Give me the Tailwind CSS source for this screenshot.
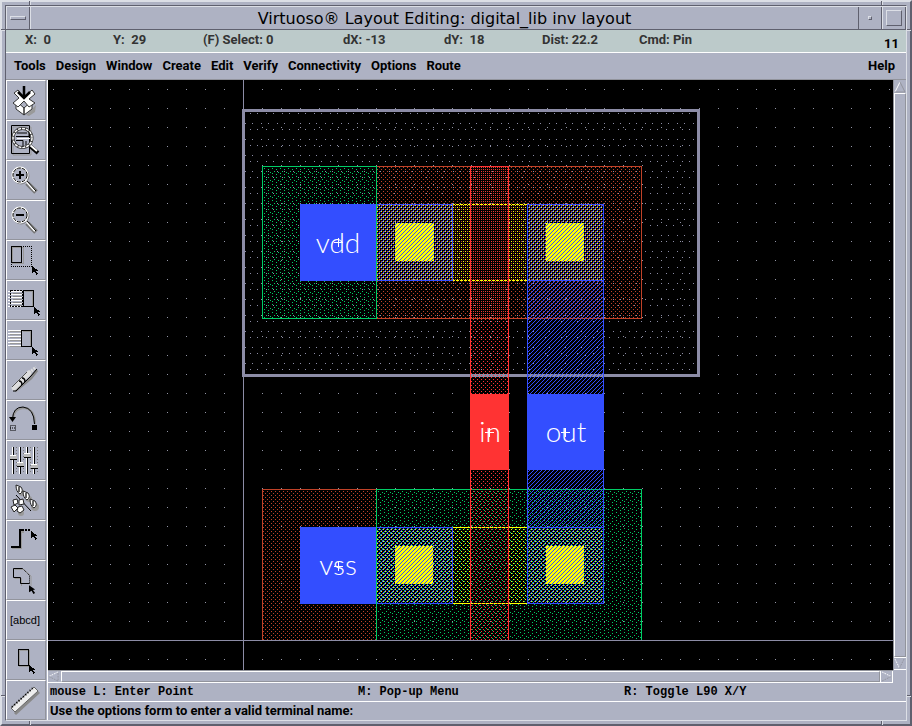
<!DOCTYPE html>
<html lang="en">
<head>
<meta charset="utf-8">
<title>Virtuoso Layout Editing</title>
<script src="https://cdn.jsdelivr.net/npm/@tailwindcss/browser@4"></script>
</head>
<body class="bg-[#aeb2c3] text-black font-['Roboto','Liberation_Sans',sans-serif]">
<svg class="absolute w-0 h-0" aria-hidden="true">
  <defs>
    <symbol id="cursor" viewBox="0 0 8 10"><path d="M0 0L7 5L4.500 5.500L7 9L5 10L3 6.500L0 8Z" fill="#000"/></symbol>
  </defs>
</svg>
<div class="relative min-h-screen flex flex-col border-2 border-t-[#dcdfe6] border-l-[#dcdfe6] border-b-[#5f606e] border-r-[#5f606e] p-[3px]">
  <i class="absolute -top-px left-[27px] h-1 w-0.5 bg-[#5f606e] border-r border-[#dcdfe6]"></i>
  <i class="absolute -top-px right-[27px] h-1 w-0.5 bg-[#5f606e] border-r border-[#dcdfe6]"></i>
  <i class="absolute -left-px top-[27px] w-1 h-0.5 bg-[#5f606e] border-b border-[#dcdfe6]"></i>
  <i class="absolute -right-px top-[27px] w-1 h-0.5 bg-[#5f606e] border-b border-[#dcdfe6]"></i>
  <i class="absolute -left-px bottom-[27px] w-1 h-0.5 bg-[#5f606e] border-b border-[#dcdfe6]"></i>
  <i class="absolute -right-px bottom-[27px] w-1 h-0.5 bg-[#5f606e] border-b border-[#dcdfe6]"></i>
  <i class="absolute -bottom-px left-[27px] h-1 w-0.5 bg-[#5f606e] border-r border-[#dcdfe6]"></i>
  <i class="absolute -bottom-px right-[27px] h-1 w-0.5 bg-[#5f606e] border-r border-[#dcdfe6]"></i>

  <div class="flex-1 flex flex-col border border-t-[#5f606e] border-l-[#5f606e] border-b-[#dcdfe6] border-r-[#dcdfe6]">
    <header class="flex h-6 border-t border-b border-t-[#dcdfe6] border-b-[#5f606e]">
      <button aria-label="Window menu" class="w-6 flex items-center justify-center border-l border-r border-l-[#dcdfe6] border-r-[#5f606e]">
        <span class="w-4 h-1 border border-t-[#dcdfe6] border-l-[#dcdfe6] border-b-[#5f606e] border-r-[#5f606e]"></span>
      </button>
      <h1 class="flex-1 border-l border-[#dcdfe6] text-center text-[16px] leading-6 font-['DejaVu_Sans',sans-serif]">Virtuoso® Layout Editing: digital_lib inv layout</h1>
      <button aria-label="Minimize" class="w-6 flex items-center justify-center border-l border-r border-[#5f606e]">
        <span class="size-1 border border-t-[#dcdfe6] border-l-[#dcdfe6] border-b-[#5f606e] border-r-[#5f606e]"></span>
      </button>
      <button aria-label="Maximize" class="w-6 flex items-center justify-center border-l border-r border-l-[#dcdfe6] border-r-[#5f606e]">
        <span class="size-4 border border-t-[#dcdfe6] border-l-[#dcdfe6] border-b-[#5f606e] border-r-[#5f606e]"></span>
      </button>
    </header>

    <div class="flex h-[23px] bg-[#bccaca] border-b border-white pl-[19px] pr-[7px] text-[13px] leading-5 font-bold text-[#333] whitespace-pre">
      <span class="w-[88px]">X:  0</span><span class="w-[90px]">Y:  29</span><span class="w-[140px]">(F) Select: 0</span><span class="w-[101px]">dX: -13</span><span class="w-[98px]">dY:  18</span><span class="w-[97px]">Dist: 22.2</span><span>Cmd: Pin</span>
      <span class="ml-auto self-end text-black leading-4">11</span>
    </div>

    <nav class="flex h-[27px] items-center gap-2.5 pl-2 pr-[11px] border-b border-[#92949c] text-[13px] font-bold">
      <button>Tools</button><button>Design</button><button>Window</button><button>Create</button><button>Edit</button><button>Verify</button><button>Connectivity</button><button>Options</button><button>Route</button>
      <button class="ml-auto">Help</button>
    </nav>

    <main class="flex-1 flex">
      <aside class="w-[42px] shrink-0 flex flex-col border-r border-white [&>button]:h-10 [&>button]:w-10 [&>button]:border [&>button]:border-t-white [&>button]:border-l-white [&>button]:border-b-[#92949c] [&>button]:border-r-[#92949c] [&_svg]:size-[38px]">
        <button aria-label="Save"><svg viewBox="0 0 38 38"><path d="M19 34L29 24L28 31L22 35Z" fill="#999"/><g stroke="#333" fill="#fff"><path d="M9 20L17 27V34L9 28ZM25 20L17 27V34L25 28Z"/><path d="M7 12L11 9L17 16L25 9L28 13L22 18L28 22L22 26L17 20L11 26L6 22L12 17Z"/></g><path d="M17 5V16M11 11L17 17L23 11" stroke="#000" stroke-width="2.500" fill="none"/></svg></button>
        <button aria-label="Fit"><svg viewBox="0 0 38 38" fill="none"><path d="M6 6H24V34H6Z" stroke="#999"/><path d="M4.500 4.500H22.500V32.500H4.500Z" stroke="#000"/><path d="M23 25L31 32" stroke="#000" stroke-width="4"/><path d="M23 24L30 30" stroke="#fff" stroke-width="2"/><circle cx="15.500" cy="17" r="9.500" stroke="#333" stroke-width="3"/><circle cx="15.500" cy="17" r="9.500" stroke="#fff" stroke-width="1.500" stroke-dasharray="3 1"/><path d="M9 15.500H22V11M9 19.500H16V26M19 20V24M10 12H20" stroke="#000"/><path d="M10 17.500H23" stroke="#fff"/></svg></button>
        <button aria-label="Zoom in"><svg viewBox="0 0 38 38" fill="none"><path d="M20 22L29 31" stroke="#777" stroke-width="5"/><path d="M19 20L28 30" stroke="#fff" stroke-width="2"/><path d="M20 20L29 30" stroke="#000"/><circle cx="14" cy="15" r="8" stroke="#888"/><circle cx="13" cy="14" r="7.500" stroke="#fff" stroke-width="2"/><circle cx="13" cy="14" r="7" stroke="#000" stroke-dasharray="4 1"/><path d="M13 10V18M9 14H17" stroke="#000" stroke-width="2"/></svg></button>
        <button aria-label="Zoom out"><svg viewBox="0 0 38 38" fill="none"><path d="M20 22L29 31" stroke="#777" stroke-width="5"/><path d="M19 20L28 30" stroke="#fff" stroke-width="2"/><path d="M20 20L29 30" stroke="#000"/><circle cx="14" cy="15" r="8" stroke="#888"/><circle cx="13" cy="14" r="7.500" stroke="#fff" stroke-width="2"/><circle cx="13" cy="14" r="7" stroke="#000" stroke-dasharray="4 1"/><path d="M9 14H17" stroke="#000" stroke-width="2"/></svg></button>
        <button aria-label="Stretch"><svg viewBox="0 0 38 38" fill="none" shape-rendering="crispEdges"><path d="M5.500 6.500H16.500V22.500H5.500Z" stroke="#999"/><path d="M4.500 5.500H14.500V21.500H4.500Z" stroke="#000"/><path d="M16 5.500H24.500V25.500H4.500V22" stroke="#000" stroke-dasharray="1 1"/><use href="#cursor" x="25" y="25" width="7" height="9"/></svg></button>
        <button aria-label="Copy"><svg viewBox="0 0 38 38" fill="none" shape-rendering="crispEdges"><path d="M1 10.500H16M1 13.500H16M1 16.500H16M1 19.500H16M1 22.500H16M1 25.500H16" stroke="#fff"/><path d="M3.500 9.500H15V25.500H3.500Z" stroke="#000" stroke-dasharray="2 1"/><path d="M6 12H15M6 15H15M6 18H15M6 21H15M6 24H15" stroke="#888"/><path d="M16.500 9.500H26.500V25.500H16.500Z" stroke="#000"/><path d="M18 10.500H25.500V25" stroke="#999"/><use href="#cursor" x="27" y="26" width="7" height="9"/></svg></button>
        <button aria-label="Move"><svg viewBox="0 0 38 38" fill="none" shape-rendering="crispEdges"><path d="M1 9.500H14M1 12.500H14M1 15.500H14M1 18.500H14M1 21.500H14M1 24.500H14" stroke="#fff"/><path d="M3 10.500H14M3 13.500H14M3 16.500H14M3 19.500H14M3 22.500H14M3 25.500H14" stroke="#999"/><path d="M14.500 9.500H24.500V25.500H14.500Z" stroke="#000"/><path d="M16 10.500H23.500V25" stroke="#999"/><use href="#cursor" x="25" y="26" width="7" height="9"/></svg></button>
        <button aria-label="Delete"><svg viewBox="0 0 38 38" fill="none"><path d="M8 30L24 17L30 9" stroke="#888" stroke-width="3"/><path d="M7 27L22 12" stroke="#ddd" stroke-width="5" stroke-linecap="round"/><path d="M22 12L29 6" stroke="#ddd" stroke-width="3" stroke-dasharray="2 1"/><path d="M6 30H9L24 15L30 8" stroke="#000"/><path d="M5 26L20 11" stroke="#555"/><path d="M12 20Q15 20 15 24M15 17Q18 17 18 21" stroke="#000" stroke-width="1.500"/></svg></button>
        <button aria-label="Undo"><svg viewBox="0 0 38 38" fill="none"><path d="M6 18Q7 7 17 7Q28 8 28 23" stroke="#999" stroke-width="2"/><path d="M5.500 18Q6 6 16 6Q27 7 27.500 23" stroke="#000"/><path d="M2 16H9L5.500 21Z" fill="#000"/><path d="M25 24H30V29H25Z" fill="#000"/><path d="M3.500 24.500H8.500V29.500H3.500ZM3 27H9" stroke="#000" stroke-dasharray="1 1"/></svg></button>
        <button aria-label="Properties"><svg viewBox="0 0 38 38" fill="none" shape-rendering="crispEdges"><path d="M5.500 6V33M12.500 6V33M19.500 6V33M26.500 6V33" stroke="#fff"/><path d="M6.500 6V33M13.500 6V33M20.500 6V33M27.500 6V33" stroke="#000"/><path d="M9.500 6V33M16.500 6V33M23.500 6V33M30.500 6V33" stroke="#777" stroke-dasharray="1 2"/><path d="M3 14H10V18H3ZM10 21H17V25H10ZM17 12H24V16H17ZM24 23H31V27H24Z" fill="#bbb"/><path d="M3 14.500H9M10 21.500H16M17 12.500H23M24 23.500H30" stroke="#fff"/><path d="M3 18.500H10M10 25.500H17M17 16.500H24M24 27.500H31" stroke="#000"/></svg></button>
        <button aria-label="Instance"><svg viewBox="0 0 38 38" fill="none"><path d="M9 14L24 30" stroke="#000"/><g fill="#999"><circle cx="15" cy="12" r="3"/><circle cx="22" cy="18" r="3"/><circle cx="28" cy="26" r="4"/><circle cx="14" cy="32" r="3"/></g><g fill="#fff" stroke="#222"><path d="M9 4L14 6Q17 10 13 13Q9 11 9 4ZM16 10L21 12Q24 16 20 19Q16 17 16 10ZM23 18L28 20Q31 24 27 27Q23 25 23 18Z"/><path d="M6 19L10 18L11 22L7 24ZM12 19L16 18L17 23L12 24ZM4 26L8 24L11 27L7 31ZM11 26L15 25L17 29L13 32L10 30Z"/></g><path d="M12 6V11M19 12V17M26 20V25" stroke="#333" stroke-width="1.500"/></svg></button>
        <button aria-label="Path"><svg viewBox="0 0 38 38" fill="none" shape-rendering="crispEdges"><path d="M5 27H14V11H17" stroke="#999" stroke-width="2"/><path d="M4 26H13V9H17" stroke="#000" stroke-width="2"/><path d="M18 9H24" stroke="#000" stroke-width="2" stroke-dasharray="2 1"/><use href="#cursor" x="24" y="10" width="7" height="9"/></svg></button>
        <button aria-label="Polygon"><svg viewBox="0 0 38 38" fill="none"><path d="M7.500 8.500H17L24 15V25M7.500 17.500H14.500V25" stroke="#999"/><path d="M22.500 22.500H13.500V16.500H6.500V7.500H15.500" stroke="#000"/><path d="M15.500 7.500L22.500 14.500V23" stroke="#000" stroke-dasharray="1 1"/><use href="#cursor" x="22" y="24" width="7" height="9"/></svg></button>
        <button aria-label="Label" class="text-[11px] text-left pl-[3px] font-['Liberation_Sans',sans-serif]">[abcd]</button>
        <button aria-label="Rectangle"><svg viewBox="0 0 38 38" fill="none" shape-rendering="crispEdges"><path d="M12.500 9.500H22.500V25.500H12.500Z" stroke="#999"/><path d="M11.500 8.500H21.500V24.500H11.500Z" stroke="#000"/><use href="#cursor" x="22" y="24" width="7" height="9"/></svg></button>
        <button aria-label="Ruler"><svg viewBox="0 0 38 38" fill="none"><path d="M8 33L32 11" stroke="#888" stroke-width="3"/><path d="M4 27L27 6L31 10L8 31Z" fill="#eee" stroke="#666"/><path d="M5 26L27 6" stroke="#000" stroke-width="2" stroke-dasharray="1 2"/></svg></button>
      </aside>

      <section class="flex-1 min-w-0 flex flex-col">
        <div class="flex-1 flex">
          <div class="relative flex-1 min-w-0 bg-black overflow-hidden">
            <svg class="absolute inset-0 w-full h-full" shape-rendering="crispEdges" role="img" aria-label="Inverter layout">
              <defs>
                <pattern id="grid" width="19" height="19" x="15" y="13" patternUnits="userSpaceOnUse"><path d="M0 0h1v1h-1z" fill="#9294a4"/></pattern>
                <pattern id="well" width="16" height="16" patternUnits="userSpaceOnUse"><path d="M1 1h1v1h-1zM10 1h1v1h-1zM5 11h1v1h-1zM12 11h1v1h-1z" fill="#8c8ca6"/></pattern>
                <pattern id="rust" width="4" height="4" patternUnits="userSpaceOnUse"><path d="M1 1h1v1h-1zM3 3h1v1h-1z" fill="#c04228"/></pattern>
                <pattern id="poly" width="4" height="4" patternUnits="userSpaceOnUse"><path d="M3 1h1v1h-1zM1 3h1v1h-1z" fill="#ff3333"/></pattern>
                <pattern id="diff" width="4" height="4" patternUnits="userSpaceOnUse"><path d="M3 1h1v1h-1zM1 3h1v1h-1z" fill="#ffff00"/></pattern>
                <pattern id="green" width="8" height="8" patternUnits="userSpaceOnUse"><path d="M0 0h1v1h-1zM4 1h1v1h-1zM2 3h1v1h-1zM6 4h1v1h-1zM0 5h1v1h-1zM4 6h1v1h-1z" fill="#00cc66"/></pattern>
                <pattern id="metal" width="4" height="4" patternUnits="userSpaceOnUse"><path d="M3 0h1v1h-1zM2 1h1v1h-1zM1 2h1v1h-1zM0 3h1v1h-1z" fill="#334eff"/></pattern>
              </defs>
              <g transform="translate(-48 -80)" fill="none">
                <rect x="48" y="80" width="100%" height="100%" fill="url(#grid)"/>
                <path d="M243.500 80V1200M48 640.500H3000" stroke="#8c8ca6"/>
                <rect x="243.500" y="110.500" width="455" height="265" fill="url(#well)" stroke="#8c8ca6" stroke-width="3"/>
                <!-- upper device -->
                <rect x="376.500" y="166.500" width="265" height="152" fill="url(#rust)" stroke="#c04228"/>
                <rect x="262.500" y="166.500" width="114" height="152" fill="url(#green)" stroke="#00cc66"/>
                <rect x="376" y="204" width="227" height="77" fill="url(#diff)"/>
                <path d="M452 204.500H527M452 280.500H527" stroke="#ffff00" stroke-dasharray="3 1"/>
                <!-- lower device -->
                <path d="M376 489.500H262.500V640" stroke="#c04228"/>
                <rect x="262" y="489" width="114" height="151" fill="url(#rust)"/>
                <rect x="376" y="489" width="265" height="151" fill="url(#green)"/>
                <path d="M376.500 640V489.500H641.500V640" stroke="#00cc66"/>
                <rect x="376" y="527" width="227" height="77" fill="url(#diff)"/>
                <path d="M452 527.500H527M452 603.500H527" stroke="#ffff00"/>
                <!-- contacts -->
                <path d="M395 223h39v38h-39zM546 223h38v38h-38zM395 546h38v38h-38zM546 546h38v38h-38z" fill="#ffff00"/>
                <!-- poly gate -->
                <rect x="471" y="205" width="37" height="75" fill="#000"/>
                <rect x="471" y="205" width="37" height="75" fill="url(#rust)"/>
                <rect x="470" y="166" width="38" height="474" fill="url(#poly)"/>
                <path d="M470.500 640V166.500H508.500V640" stroke="#ff3333"/>
                <!-- metal -->
                <g fill="url(#metal)" stroke="#334eff">
                  <rect x="376.500" y="204.500" width="76" height="76"/>
                  <rect x="376.500" y="527.500" width="76" height="76"/>
                  <rect x="527.500" y="204.500" width="76" height="399"/>
                  <path d="M527 280.500H603M527 527.500H603"/>
                </g>
                <path d="M376.500 166V319M376.500 489V640" stroke="#00cc66"/>
                <!-- pins -->
                <path d="M300 204h76v77h-76zM300 527h76v77h-76zM527 394h77v76h-77z" fill="#334eff"/>
                <path d="M470 394h39v76h-39z" fill="#ff3333"/>
                <path d="M338.500 238V247M334 242.500H343M338.500 562V571M334 566.500H343M489.500 428V437M485 432.500H494M565.500 428V437M561 432.500H570" stroke="#fff"/>
                <g fill="#fff" class="font-['Lato',sans-serif] font-light text-[28px]" text-anchor="middle">
                  <text x="338" y="253">vdd</text><text x="338" y="575">vss</text><text x="490" y="442">in</text><text x="566" y="442">out</text>
                </g>
              </g>
            </svg>
          </div>
          <div class="w-[13px] flex flex-col border-l border-[#92949c]">
            <button aria-label="Scroll up" class="h-[13px]"><svg class="size-3" viewBox="0 0 12 12" fill="none"><path d="M1 11L6 1" stroke="#fff"/><path d="M6 1L11 11H1" stroke="#92949c"/></svg></button>
            <div class="flex-1 border border-t-white border-l-white border-b-[#92949c] border-r-[#92949c]"></div>
            <button aria-label="Scroll down" class="h-[13px] border-t border-b border-white"><svg class="size-[11px]" viewBox="0 0 12 12" fill="none"><path d="M1 1L6 11" stroke="#fff" stroke-dasharray="2 1"/><path d="M6 11L11 1" stroke="#92949c" stroke-dasharray="2 1"/></svg></button>
          </div>
        </div>
        <div class="h-[13px] mr-[13px] flex border-t border-b border-t-[#92949c] border-b-white">
          <button aria-label="Scroll left" class="w-[13px]"><svg class="size-[11px]" viewBox="0 0 12 12" fill="none"><path d="M11 1L1 6" stroke="#fff" stroke-dasharray="2 1"/><path d="M1 6L11 11V1" stroke="#92949c" stroke-dasharray="2 1"/></svg></button>
          <div class="flex-1 border border-t-white border-l-white border-b-[#92949c] border-r-[#92949c]"></div>
          <button aria-label="Scroll right" class="w-[13px] border-l border-r border-white"><svg class="size-[11px]" viewBox="0 0 12 12" fill="none"><path d="M1 1L11 6" stroke="#fff" stroke-dasharray="2 1"/><path d="M11 6L1 11" stroke="#92949c" stroke-dasharray="2 1"/></svg></button>
        </div>
        <div class="flex h-[19px] border-b border-white pl-0.5 text-[12px] leading-[18px] font-bold font-['Liberation_Mono',monospace]">
          <span class="w-[308px]">mouse L: Enter Point</span><span class="w-[266px]">M: Pop-up Menu</span><span>R: Toggle L90 X/Y</span>
        </div>
        <p class="h-[18px] pl-0.5 text-[13px] leading-[18px] font-bold">Use the options form to enter a valid terminal name:</p>
      </section>
    </main>
  </div>
</div>
</body>
</html>
